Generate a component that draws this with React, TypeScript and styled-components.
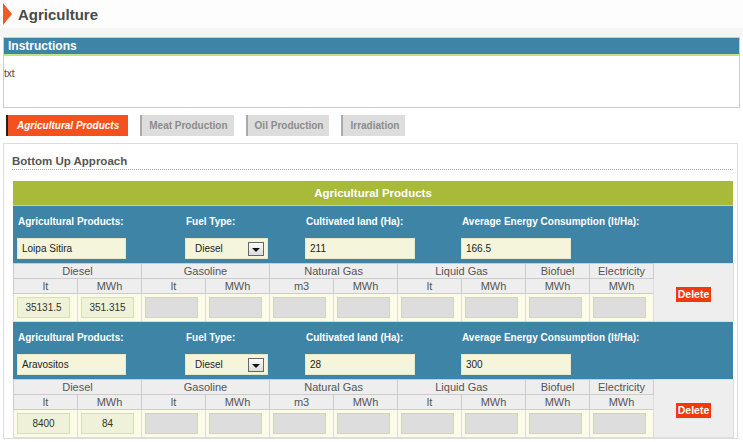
import React from "react";
import styled, { createGlobalStyle } from "styled-components";

const GlobalStyle = createGlobalStyle`
  html, body {
    margin: 0;
    padding: 0;
    overflow: hidden;
    background: #ffffff;
    font-family: "Liberation Sans", Arial, sans-serif;
  }
`;

const Page = styled.div`
  width: 743px;
`;

const Header = styled.div`
  height: 28px;
  display: flex;
  align-items: center;
  padding-left: 3px;
  background: #fdfdfd;
  border-bottom: 9px solid #f5f5f5;
`;

const Arrow = styled.span`
  width: 0;
  height: 0;
  border-top: 11px solid transparent;
  border-bottom: 11px solid transparent;
  border-left: 9px solid #f15a24;
  margin-right: 6px;
`;

const Title = styled.h1`
  margin: 0;
  font-size: 15px;
  font-weight: bold;
  color: #4a4a4a;
`;

const InstructionsBox = styled.div`
  margin: 0 3px;
  border: 1px solid #cccccc;
  background: #ffffff;
`;

const InstructionsBar = styled.div`
  height: 16px;
  line-height: 17px;
  padding-left: 4px;
  background: #3d84a6;
  color: #ffffff;
  font-size: 12px;
  font-weight: bold;
  border-bottom: 2px solid #c6e184;
`;

const InstructionsBody = styled.div`
  height: 51px;
  box-sizing: border-box;
  padding-top: 12px;
  font-size: 10px;
  color: #444;
`;

const Tabs = styled.div`
  display: flex;
  margin-top: 7px;
  padding-left: 6px;
  gap: 12px;
`;

const Tab = styled.div<{ $active?: boolean }>`
  height: 21px;
  line-height: 21px;
  padding: ${(p) => (p.$active ? "0 9px" : "0 6px 0 7px")};
  font-size: 10px;
  font-weight: bold;
  font-style: ${(p) => (p.$active ? "italic" : "normal")};
  color: ${(p) => (p.$active ? "#ffffff" : "#8c8c8c")};
  background: ${(p) => (p.$active ? "#f4511e" : "#dddddd")};
  border-left: 2px solid ${(p) => (p.$active ? "#222222" : "#aaaaaa")};
`;

const Panel = styled.div`
  margin: 7px 0 0 3px;
  width: 735px;
  box-sizing: border-box;
  border: 1px solid #dddddd;
  padding: 0 4px 0 9px;
  background: #ffffff;
`;

const SectionTitle = styled.div`
  margin: 11px 0 11px -1px;
  padding-bottom: 1px;
  font-size: 11.5px;
  line-height: 13px;
  font-weight: bold;
  color: #555555;
  border-bottom: 1px dotted #aaaaaa;
`;

const GreenBar = styled.div`
  height: 24px;
  line-height: 24px;
  text-align: center;
  background: #a9ba3b;
  color: #ffffff;
  font-size: 11.5px;
  font-weight: bold;
  border-bottom: 1px solid #c9d77a;
`;

const BlueRow = styled.div`
  display: grid;
  grid-template-columns: 168px 120px 156px 1fr;
  grid-template-rows: 14px 21px;
  row-gap: 9px;
  padding: 9px 0 4px 4px;
  background: #3d84a6;
`;

const Label = styled.div`
  padding-left: 1px;
  font-size: 10px;
  font-weight: bold;
  color: #ffffff;
  line-height: 14px;
`;

const Field = styled.div<{ $w: number }>`
  width: ${(p) => p.$w}px;
  height: 21px;
  box-sizing: border-box;
  background: #f5f5dc;
  border: 1px solid #e6e8c8;
  font-size: 10px;
  line-height: 19px;
  padding-left: 4px;
  color: #222;
`;

const SelectBox = styled.div`
  width: 83px;
  height: 21px;
  box-sizing: border-box;
  background: #f5f5dc;
  border: 1px solid #e6e8c8;
  display: flex;
  align-items: center;
  justify-content: space-between;
  padding: 0 3px 0 9px;
  font-size: 10px;
  color: #222;
`;

const SelectButton = styled.span`
  width: 16px;
  height: 14px;
  box-sizing: border-box;
  border: 1px solid #666;
  background: linear-gradient(#fafafa, #dcdcdc);
  display: flex;
  align-items: center;
  justify-content: center;
  &::after {
    content: "";
    margin-top: 3px;
    border-left: 4px solid transparent;
    border-right: 4px solid transparent;
    border-top: 4px solid #111;
  }
`;

const FuelTable = styled.table`
  width: 720px;
  border-collapse: collapse;
  table-layout: fixed;
  background: #fbfbe6;
`;

const Th = styled.th`
  height: 14px;
  padding: 0;
  font-size: 11px;
  font-weight: normal;
  color: #555;
  background: #eeeeee;
  border: 1px solid #cccccc;
  line-height: 14px;
`;

const Td = styled.td`
  height: 27px;
  padding: 0 0 0 3px;
  border: 1px solid #dddddd;
  vertical-align: middle;
`;

const ActionCell = styled.td`
  background: #eeeeee;
  border: 1px solid #dddddd;
  text-align: center;
  vertical-align: middle;
  padding: 0;
`;

const ValueBox = styled.div<{ $filled?: boolean }>`
  width: 53px;
  height: 21px;
  box-sizing: border-box;
  background: ${(p) => (p.$filled ? "#eff1d8" : "#dddddd")};
  border: 1px solid ${(p) => (p.$filled ? "#d9ddb4" : "#d2d4bc")};
  font-size: 10px;
  line-height: 19px;
  text-align: center;
  color: #333;
`;

const DeleteButton = styled.span`
  display: inline-block;
  width: 35px;
  height: 15px;
  line-height: 15px;
  background: #f0390d;
  color: #ffffff;
  font-size: 10.5px;
  font-weight: bold;
`;

interface IRecord {
  product: string;
  land: string;
  avg: string;
  lt: string;
  mwh: string;
}

const records: IRecord[] = [
  { product: "Loipa Sitira", land: "211", avg: "166.5", lt: "35131.5", mwh: "351.315" },
  { product: "Aravositos", land: "28", avg: "300", lt: "8400", mwh: "84" },
];

const Record: React.FC<{ r: IRecord }> = ({ r }) => (
  <>
    <BlueRow>
      <Label>Agricultural Products:</Label>
      <Label>Fuel Type:</Label>
      <Label>Cultivated land (Ha):</Label>
      <Label>Average Energy Consumption (lt/Ha):</Label>
      <Field $w={109}>{r.product}</Field>
      <SelectBox>
        Diesel
        <SelectButton />
      </SelectBox>
      <Field $w={110}>{r.land}</Field>
      <Field $w={110}>{r.avg}</Field>
    </BlueRow>
    <FuelTable>
      <colgroup>
        {Array.from({ length: 10 }).map((_, i) => (
          <col key={i} style={{ width: 64 }} />
        ))}
        <col style={{ width: 80 }} />
      </colgroup>
      <tbody>
        <tr>
          <Th colSpan={2}>Diesel</Th>
          <Th colSpan={2}>Gasoline</Th>
          <Th colSpan={2}>Natural Gas</Th>
          <Th colSpan={2}>Liquid Gas</Th>
          <Th>Biofuel</Th>
          <Th>Electricity</Th>
          <ActionCell rowSpan={3}>
            <DeleteButton>Delete</DeleteButton>
          </ActionCell>
        </tr>
        <tr>
          {["lt", "MWh", "lt", "MWh", "m3", "MWh", "lt", "MWh", "MWh", "MWh"].map((u, i) => (
            <Th key={i}>{u}</Th>
          ))}
        </tr>
        <tr>
          <Td>
            <ValueBox $filled>{r.lt}</ValueBox>
          </Td>
          <Td>
            <ValueBox $filled>{r.mwh}</ValueBox>
          </Td>
          {Array.from({ length: 8 }).map((_, i) => (
            <Td key={i}>
              <ValueBox />
            </Td>
          ))}
        </tr>
      </tbody>
    </FuelTable>
  </>
);

const App: React.FC = () => {
  return (
    <Page>
      <GlobalStyle />
      <Header>
        <Arrow />
        <Title>Agriculture</Title>
      </Header>
      <InstructionsBox>
        <InstructionsBar>Instructions</InstructionsBar>
        <InstructionsBody>txt</InstructionsBody>
      </InstructionsBox>
      <Tabs>
        <Tab $active>Agricultural Products</Tab>
        <Tab>Meat Production</Tab>
        <Tab>Oil Production</Tab>
        <Tab>Irradiation</Tab>
      </Tabs>
      <Panel>
        <SectionTitle>Bottom Up Approach</SectionTitle>
        <GreenBar>Agricultural Products</GreenBar>
        {records.map((r, i) => (
          <Record key={i} r={r} />
        ))}
      </Panel>
    </Page>
  );
};

export default App;
